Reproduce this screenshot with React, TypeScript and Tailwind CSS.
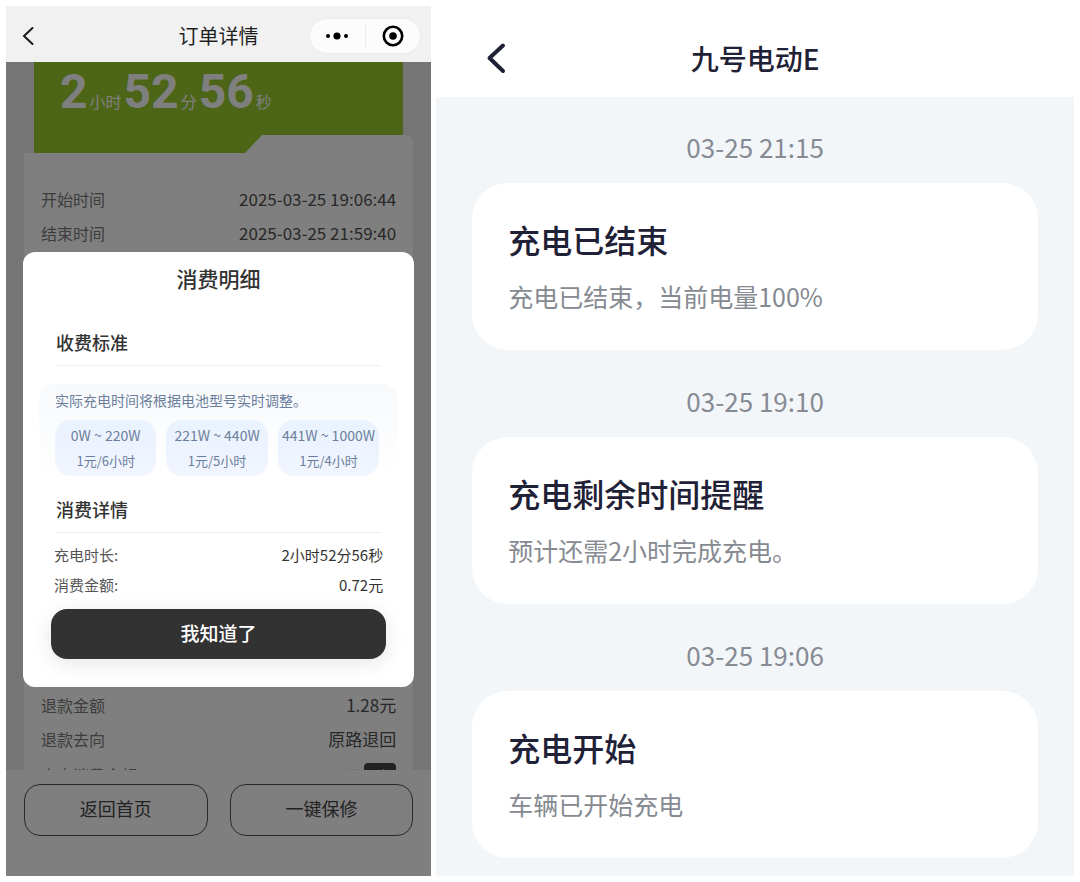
import * as React from 'react';

type Row = {
  label: string;
  value: string;
};

type Notice = {
  time: string;
  title: string;
  body: string;
};

const topRows: Row[] = [
  { label: '开始时间', value: '2025-03-25 19:06:44' },
  { label: '结束时间', value: '2025-03-25 21:59:40' },
];

const refundRows: Row[] = [
  { label: '退款金额', value: '1.28元' },
  { label: '退款去向', value: '原路退回' },
];

const rates = [
  { power: '0W ~ 220W', price: '1元/6小时' },
  { power: '221W ~ 440W', price: '1元/5小时' },
  { power: '441W ~ 1000W', price: '1元/4小时' },
];

const details: Row[] = [
  { label: '充电时长:', value: '2小时52分56秒' },
  { label: '消费金额:', value: '0.72元' },
];

const notices: Notice[] = [
  { time: '03-25 21:15', title: '充电已结束', body: '充电已结束，当前电量100%' },
  { time: '03-25 19:10', title: '充电剩余时间提醒', body: '预计还需2小时完成充电。' },
  { time: '03-25 19:06', title: '充电开始', body: '车辆已开始充电' },
];

const App: React.FC = () => (
  <div className="grid grid-cols-[2fr_3fr] gap-[5px] bg-white p-1.5 font-['Noto_Sans_CJK_SC',sans-serif]">
    <OrderScreen />
    <NoticeScreen />
  </div>
);

export default App;

function OrderScreen() {
  const [open, setOpen] = React.useState(true);

  return (
    <section className="flex flex-col">
      <header className="grid h-14 grid-cols-[1fr_auto_1fr] items-center bg-[#f1f1f1] px-2.5 pt-1">
        <button type="button" aria-label="返回" className="justify-self-start pl-1.5">
          <svg width="12" height="20" viewBox="0 0 12 20" fill="none" stroke="#1a1a1a" strokeWidth="2">
            <path d="M10.5 2 2 10l8.5 8" strokeLinecap="round" />
          </svg>
        </button>
        <h1 className="text-xl leading-7 text-[#1f1f1f]">订单详情</h1>
        <Capsule />
      </header>

      <div className="relative flex flex-1 flex-col">
        <main className="flex flex-1 flex-col overflow-hidden bg-[#ebebeb]">
          <div className="mx-7 flex h-[91px] items-start bg-[#98ca2c] pl-[26px] text-white">
            <Duration />
          </div>

          <div className="mx-[18px] -mt-[18px] flex flex-1 flex-col rounded-tr-lg bg-white px-[17px] pt-[47px] [clip-path:polygon(0_18px,221px_18px,238px_0,100%_0,100%_100%,0_100%)]">
            {topRows.map((row) => (
              <OrderRow key={row.label} {...row} />
            ))}
            <div className="mt-auto -mb-6">
              {refundRows.map((row) => (
                <OrderRow key={row.label} {...row} />
              ))}
              <div className="flex h-[38px] items-center text-base">
                <span className="text-[#7a7a7a]">充电消费金额</span>
                <span className="ml-auto text-[#98ca2c]">0.72元</span>
                <span className="ml-1 rounded bg-[#444] px-1 text-xs leading-6 text-white">明细</span>
              </div>
            </div>
          </div>
        </main>

        <footer className="flex gap-[22px] bg-white px-[18px] pt-3.5 pb-10">
          {['返回首页', '一键保修'].map((label) => (
            <button
              key={label}
              type="button"
              className="h-[52px] flex-1 rounded-2xl border border-[#555] pb-1 text-lg text-[#444]"
            >
              {label}
            </button>
          ))}
        </footer>

        {open && (
          <div className="absolute inset-0 flex items-center bg-black/50 px-[17px]">
            <BillDialog onClose={() => setOpen(false)} />
          </div>
        )}
      </div>
    </section>
  );
}

function Capsule() {
  return (
    <div className="flex h-9 w-28 items-center justify-self-end rounded-full border border-[#ebebeb] bg-[#fcfcfc]">
      <button type="button" aria-label="更多" className="flex flex-1 justify-center">
        <svg width="24" height="8" viewBox="0 0 24 8" fill="#000">
          <circle cx="3" cy="4" r="2" />
          <circle cx="12" cy="4" r="3.6" />
          <circle cx="21" cy="4" r="2" />
        </svg>
      </button>
      <span className="h-6 w-px bg-[#ebebeb]" />
      <button type="button" aria-label="关闭" className="flex flex-1 justify-center">
        <svg width="22" height="22" viewBox="0 0 22 22" fill="none">
          <circle cx="11" cy="11" r="9.2" stroke="#000" strokeWidth="2.6" />
          <circle cx="11" cy="11" r="3.8" fill="#000" />
        </svg>
      </button>
    </div>
  );
}

function Duration() {
  const parts = [
    { value: '2', unit: '小时' },
    { value: '52', unit: '分' },
    { value: '56', unit: '秒' },
  ];

  return (
    <p className="flex items-baseline gap-0.5">
      {parts.map(({ value, unit }) => (
        <React.Fragment key={unit}>
          <span className="font-[Roboto,sans-serif] text-5xl leading-[60px] font-bold">{value}</span>
          <span className="text-base">{unit}</span>
        </React.Fragment>
      ))}
    </p>
  );
}

function OrderRow({ label, value }: Row) {
  return (
    <div className="flex h-[34px] items-center justify-between">
      <span className="text-base text-[#7a7a7a]">{label}</span>
      <span className="text-[17px] text-[#505050]">{value}</span>
    </div>
  );
}

function BillDialog({ onClose }: { onClose: () => void }) {
  return (
    <div
      role="dialog"
      aria-labelledby="bill-title"
      className="w-full rounded-xl bg-white px-4 pt-3 pb-7 text-[#333]"
    >
      <h2 id="bill-title" className="text-center text-[21px] leading-7 font-medium">
        消费明细
      </h2>

      <SectionTitle className="mt-[37px]">收费标准</SectionTitle>
      <div className="mt-[18px] rounded-2xl bg-linear-to-b from-[#f7f9fb] to-white pt-1.5 pr-[19px] pl-4 text-[#6b7f9c]">
        <p className="text-sm leading-5">实际充电时间将根据电池型号实时调整。</p>
        <ul className="mt-2.5 grid grid-cols-3 gap-2.5">
          {rates.map(({ power, price }) => (
            <li
              key={power}
              className="flex h-14 flex-col items-center justify-center rounded-2xl bg-linear-to-b from-[#e9f2fe] to-[#f1f5ff] leading-[25px] whitespace-nowrap"
            >
              <span className="text-sm leading-[25px]">{power}</span>
              <span className="text-[13px]">{price}</span>
            </li>
          ))}
        </ul>
      </div>

      <SectionTitle className="mt-5">消费详情</SectionTitle>
      <dl className="mt-[7px] px-[15px] text-[15px] leading-[30px]">
        {details.map(({ label, value }) => (
          <div key={label} className="flex justify-between">
            <dt className="text-[#555]">{label}</dt>
            <dd>{value}</dd>
          </div>
        ))}
      </dl>

      <div className="mt-[9px] px-3">
        <button
          type="button"
          className="h-[50px] w-full rounded-2xl bg-[#323232] text-[19px] font-medium text-white shadow-[0_4px_20px_rgba(0,0,0,0.1)]"
          onClick={onClose}
        >
          我知道了
        </button>
      </div>
    </div>
  );
}

function SectionTitle({ className, children }: { className: string; children: React.ReactNode }) {
  return (
    <h3
      className={`mx-[17px] border-b border-[#efefef] pb-2.5 text-lg leading-[26px] font-medium ${className}`}
    >
      {children}
    </h3>
  );
}

function NoticeScreen() {
  return (
    <section className="flex flex-col">
      <header className="grid h-[91px] grid-cols-[1fr_auto_1fr] items-center bg-white px-12 pt-3 text-[#1f2136]">
        <button type="button" aria-label="返回" className="justify-self-start">
          <svg width="22" height="32" viewBox="0 0 22 32" fill="none" stroke="currentColor" strokeWidth="4">
            <path d="M19 3.5 5.5 16 19 29" strokeLinecap="round" strokeLinejoin="round" />
          </svg>
        </button>
        <h1 className="text-[28px] leading-10 font-medium">九号电动E</h1>
      </header>

      <ol className="flex flex-1 flex-col gap-[35px] bg-[#f3f6f9] px-9 pt-[34px] pb-[18px]">
        {notices.map(({ time, title, body }) => (
          <li key={time}>
            <time className="block text-center text-[26px] leading-8 text-[#868b94]">{time}</time>
            <article className="mt-5 rounded-[36px] bg-white px-9 pt-[34px] pb-9">
              <h2 className="text-[32px] leading-[44px] font-medium text-[#1f2136]">{title}</h2>
              <p className="mt-[17px] text-[25px] leading-9 text-[#868a91]">{body}</p>
            </article>
          </li>
        ))}
      </ol>
    </section>
  );
}
